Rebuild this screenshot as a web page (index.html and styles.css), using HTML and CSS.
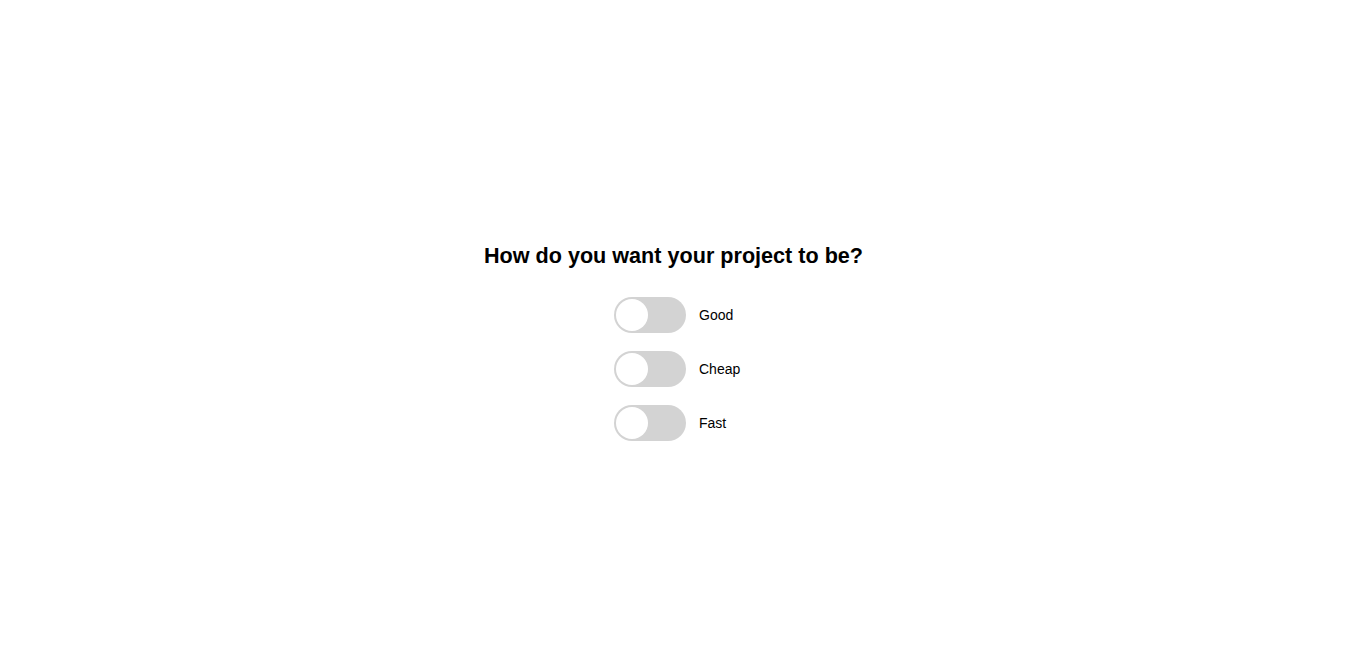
FILE: index.html
```html
<!DOCTYPE html>
<html>
<head>
<meta charset="utf-8">
<link rel="stylesheet" href="styles.css">
</head>
<body>
<main class="page">
  <h2 class="title">How do you want your project to be?</h2>
  <div class="options">
    <label class="option"><span class="switch"><span class="knob"></span></span><span class="label">Good</span></label>
    <label class="option"><span class="switch"><span class="knob"></span></span><span class="label">Cheap</span></label>
    <label class="option"><span class="switch"><span class="knob"></span></span><span class="label">Fast</span></label>
  </div>
</main>
</body>
</html>
```

FILE: styles.css
```css
html, body {
  margin: 0;
  padding: 0;
  background: #ffffff;
}
body {
  font-family: "Liberation Sans", Arial, sans-serif;
  color: #000;
}
.page {
  height: 670px;
  box-sizing: border-box;
  padding-top: 14px;
  display: flex;
  flex-direction: column;
  align-items: center;
  justify-content: center;
}
.title {
  font-size: 21.6px;
  line-height: 26px;
  font-weight: bold;
  margin: 0 0 28px 0;
}
.options {
  width: 120px;
  display: flex;
  flex-direction: column;
  gap: 18px;
  margin-left: 1px;
}
.option {
  display: flex;
  align-items: center;
  gap: 13px;
  white-space: nowrap;
}
.switch {
  width: 72px;
  height: 36px;
  border-radius: 18px;
  background: #d3d3d3;
  display: flex;
  align-items: center;
  padding: 0 2px;
  box-sizing: border-box;
  flex: none;
}
.knob {
  width: 32px;
  height: 32px;
  border-radius: 50%;
  background: #ffffff;
}
.label {
  font-size: 14px;
}
```
